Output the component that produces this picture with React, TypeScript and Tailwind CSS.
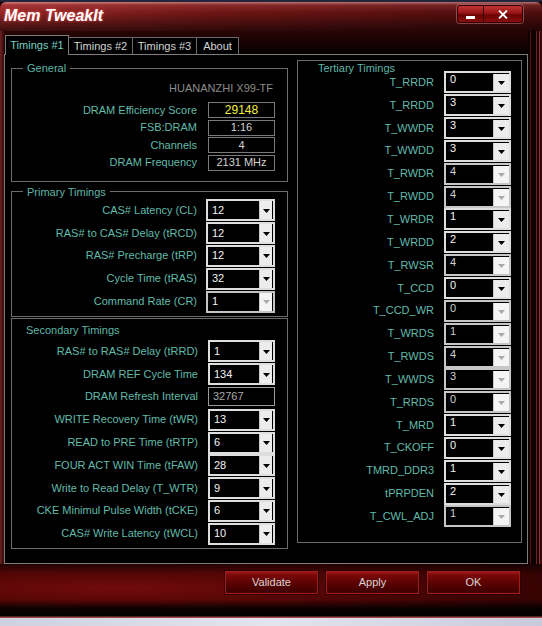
import React from "react";

type Item = { label: string; value: string; disabled?: boolean; field?: boolean };

const primary: Item[] = [
  { label: "CAS# Latency (CL)", value: "12" },
  { label: "RAS# to CAS# Delay (tRCD)", value: "12" },
  { label: "RAS# Precharge (tRP)", value: "12" },
  { label: "Cycle Time (tRAS)", value: "32" },
  { label: "Command Rate (CR)", value: "1", disabled: true },
];

const secondary: Item[] = [
  { label: "RAS# to RAS# Delay (tRRD)", value: "1" },
  { label: "DRAM REF Cycle Time", value: "134" },
  { label: "DRAM Refresh Interval", value: "32767", field: true },
  { label: "WRITE Recovery Time (tWR)", value: "13" },
  { label: "READ to PRE Time (tRTP)", value: "6" },
  { label: "FOUR ACT WIN Time (tFAW)", value: "28" },
  { label: "Write to Read Delay (T_WTR)", value: "9" },
  { label: "CKE Minimul Pulse Width (tCKE)", value: "6" },
  { label: "CAS# Write Latency (tWCL)", value: "10" },
];

const tertiary: Item[] = [
  { label: "T_RRDR", value: "0" },
  { label: "T_RRDD", value: "3" },
  { label: "T_WWDR", value: "3" },
  { label: "T_WWDD", value: "3" },
  { label: "T_RWDR", value: "4", disabled: true },
  { label: "T_RWDD", value: "4", disabled: true },
  { label: "T_WRDR", value: "1" },
  { label: "T_WRDD", value: "2" },
  { label: "T_RWSR", value: "4", disabled: true },
  { label: "T_CCD", value: "0" },
  { label: "T_CCD_WR", value: "0", disabled: true },
  { label: "T_WRDS", value: "1", disabled: true },
  { label: "T_RWDS", value: "4", disabled: true },
  { label: "T_WWDS", value: "3", disabled: true },
  { label: "T_RRDS", value: "0", disabled: true },
  { label: "T_MRD", value: "1" },
  { label: "T_CKOFF", value: "0" },
  { label: "TMRD_DDR3", value: "1" },
  { label: "tPRPDEN", value: "2" },
  { label: "T_CWL_ADJ", value: "1", disabled: true },
];

const general = [
  { label: "DRAM Efficiency Score", value: "29148", hi: true },
  { label: "FSB:DRAM", value: "1:16" },
  { label: "Channels", value: "4" },
  { label: "DRAM Frequency", value: "2131 MHz" },
];

function Arrow({ disabled }: { disabled?: boolean }) {
  return (
    <svg width="7" height="4" viewBox="0 0 7 4" className="mt-[1px]">
      <path d="M0 0H7L3.5 4Z" fill={disabled ? "#a9a9a9" : "#000"} />
    </svg>
  );
}

// Combo box used in the primary / secondary lists
function Combo({ value, disabled, wide }: { value: string; disabled?: boolean; wide?: boolean }) {
  return (
    <div
      className={
        "flex h-[22px] shrink-0 items-center border-2 bg-black " +
        (wide ? "w-[69px] " : "w-[67px] ") +
        (disabled ? "border-[#c4c4c4]" : "border-[#dedede]")
      }
    >
      <span className="pl-[4px] text-[11px] leading-[13px] text-[#f4f4f4]">{value}</span>
      <div
        className={
          "ml-auto mr-[1px] flex h-[18px] w-[13px] items-center justify-center border-l border-[#c9c9c9] " +
          (disabled ? "bg-[#f4f4f4]" : "bg-[#ececec]")
        }
      >
        <Arrow disabled={disabled} />
      </div>
    </div>
  );
}

// Combo box used in the tertiary list (value sits at the top)
function SmallCombo({ value, disabled }: { value: string; disabled?: boolean }) {
  return (
    <div
      className={
        "flex h-[22px] w-[67px] shrink-0 items-start border-2 bg-black " +
        (disabled ? "border-[#c6c6c6]" : "border-[#dedede]")
      }
    >
      <span
        className={
          "pl-[4px] text-[11px] leading-[13px] " + (disabled ? "text-[#cfcfcf]" : "text-[#f4f4f4]")
        }
      >
        {value}
      </span>
      <div
        className={
          "ml-auto mr-[0px] mt-[1px] flex h-[17px] w-[16px] items-center justify-center border-l border-[#c9c9c9] " +
          (disabled ? "bg-[#f4f4f4]" : "bg-[#ececec]")
        }
      >
        <Arrow disabled={disabled} />
      </div>
    </div>
  );
}

function Row({ item, wide, gap }: { item: Item; wide?: boolean; gap: string }) {
  return (
    <div className="flex h-[22.8px] items-center justify-end">
      <span className={"whitespace-nowrap text-[11px] leading-[13px] text-[#62bbaa] " + gap}>{item.label}</span>
      {item.field ? (
        <div className="flex h-[19px] w-[67px] shrink-0 items-center border border-[#9a9a9a] bg-black">
          <span className="pl-[4px] text-[11px] leading-[13px] text-[#a8a8a8]">{item.value}</span>
        </div>
      ) : (
        <Combo value={item.value} disabled={item.disabled} wide={wide} />
      )}
    </div>
  );
}

function Tab({ label, active, first }: { label: string; active?: boolean; first?: boolean }) {
  if (active) {
    return (
      <div className="relative z-10 -mb-px flex h-[20px] w-[64px] items-center justify-center border border-b-0 border-[#7c7c7c] bg-black text-[11px] text-[#74d0c3]">
        {label}
      </div>
    );
  }
  return (
    <div
      className={
        "flex h-[17px] items-center justify-center border-t border-r border-[#6a6a6a] bg-black text-[11px] text-[#d4d4d4] " +
        (first ? "w-[64px]" : "w-[64px]")
      }
    >
      {label}
    </div>
  );
}

function RedButton({ label }: { label: string }) {
  return (
    <div className="flex h-[23px] w-[93px] items-center justify-center border border-[#a21c1c] bg-[linear-gradient(180deg,#9a1a1a_0px,#7a0808_3px,#5c0202_11px,#3e0000_20px,#7a1010_23px)] text-[11px] text-[#d6d6d6] shadow-[0_0_0_1px_rgba(40,0,0,0.8)]">
      {label}
    </div>
  );
}

export default function App() {
  return (
    <div className="flex h-[626px] w-[542px] flex-col overflow-hidden bg-[#d6d6e4] font-['Liberation_Sans',Arial,sans-serif]">
      <div className="h-[2px] shrink-0 bg-[#24243a]" />
      <div className="flex h-[616px] shrink-0 flex-col bg-[#1a0000]">
        {/* title bar */}
        <div className="flex h-[29px] shrink-0 items-start rounded-t-[6px] bg-[linear-gradient(180deg,rgba(255,200,200,0.55)_0px,rgba(255,130,130,0.18)_3px,rgba(0,0,0,0)_10px,rgba(0,0,0,0.6)_29px),linear-gradient(90deg,#942626_0%,#701616_40%,#4e0c0c_100%)]">
          <span className="pl-[4px] pt-[4px] text-[16px] font-bold italic leading-[20px] text-white [text-shadow:0_0_3px_rgba(255,90,90,0.9)]">
            Mem TweakIt
          </span>
          <div className="ml-auto mr-[19px] mt-[3px] flex h-[18px] overflow-hidden rounded-[3px] border border-[#2a0000] shadow-[0_0_0_1px_rgba(230,140,140,0.45)]">
            <div className="flex w-[25px] items-end justify-center bg-[linear-gradient(180deg,#c23434_0%,#981414_45%,#6a0202_55%,#8a0e0e_100%)] pb-[3px]">
              <div className="h-[3px] w-[9px] bg-white" />
            </div>
            <div className="flex w-[39px] items-center justify-center border-l border-[#3a0000] bg-[linear-gradient(180deg,#c23434_0%,#981414_45%,#6a0202_55%,#8a0e0e_100%)]">
              <svg width="10" height="9" viewBox="0 0 10 9">
                <path d="M1 0.5L9 8.5M9 0.5L1 8.5" stroke="#fff" strokeWidth="1.8" />
              </svg>
            </div>
          </div>
        </div>

        {/* tabs + panel */}
        <div className="flex h-[533px] shrink-0">
          <div className="w-[4px] bg-[linear-gradient(90deg,#6a2222,#3a0808)]" />
          <div className="flex w-[524px] flex-col">
            <div className="flex h-[23px] items-end bg-[linear-gradient(180deg,#2a0404,#050000)] pl-[1px]">
              <Tab label="Timings #1" active />
              <Tab label="Timings #2" first />
              <Tab label="Timings #3" />
              <div className="flex h-[17px] w-[42px] items-center justify-center border-t border-r border-[#6a6a6a] bg-black text-[11px] text-[#d4d4d4]">
                About
              </div>
            </div>
            <div className="flex h-[510px] gap-[9px] border border-[#7c7c7c] bg-black pl-[6px]">
              {/* left column */}
              <div className="flex w-[277px] flex-col">
                <fieldset className="m-0 mt-[7px] min-w-0 border border-[#6c6c6c] p-0">
                  <legend className="ml-[11px] px-[4px] text-[11px] leading-[12px] text-[#5fb6a6]">General</legend>
                  <div className="pb-[10px] pr-[12px] pt-[8px]">
                    <div className="h-[13px] pr-[2px] text-right text-[11px] leading-[13px] text-[#8c8c8c]">
                      HUANANZHI X99-TF
                    </div>
                    <div className="mt-[7px] flex flex-col gap-[1.67px]">
                      {general.map((g) => (
                        <div key={g.label} className="flex h-[16px] items-center justify-end">
                          <span className="mr-[11px] text-[11px] leading-[13px] text-[#62bbaa]">{g.label}</span>
                          <div className="flex h-[16px] w-[67px] items-center justify-center border border-[#7a7a7a] bg-black">
                            <span
                              className={
                                g.hi
                                  ? "text-[12px] leading-[14px] text-[#f4f040]"
                                  : "text-[11px] leading-[13px] text-[#d2d2d2]"
                              }
                            >
                              {g.value}
                            </span>
                          </div>
                        </div>
                      ))}
                    </div>
                  </div>
                </fieldset>

                <fieldset className="m-0 mt-[4px] min-w-0 border border-[#6c6c6c] p-0">
                  <legend className="ml-[11px] px-[4px] text-[11px] leading-[12px] text-[#5fb6a6]">Primary Timings</legend>
                  <div className="pb-[3px] pr-[12px] pt-[1px]">
                    {primary.map((it) => (
                      <Row key={it.label} item={it} wide gap="mr-[9px]" />
                    ))}
                  </div>
                </fieldset>

                <div className="mt-[1px] border border-[#6c6c6c] pb-[3px] pr-[12px] pt-[5px]">
                  <div className="h-[13px] pl-[14px] text-[11px] leading-[13px] text-[#5fb6a6]">Secondary Timings</div>
                  <div className="mt-[3px]">
                    {secondary.map((it) => (
                      <Row key={it.label} item={it} gap="mr-[10px]" />
                    ))}
                  </div>
                </div>
              </div>

              {/* tertiary column */}
              <div className="mt-[5px] flex h-[483px] w-[225px] flex-col border border-[#6c6c6c] pr-[10px]">
                <div className="h-[10px] pl-[20px] text-[11px] leading-[14px] text-[#5fb6a6]">Tertiary Timings</div>
                {tertiary.map((it) => (
                  <div key={it.label} className="flex h-[22.85px] items-center justify-end">
                    <span className="mr-[10px] text-[11px] leading-[13px] text-[#62bbaa]">{it.label}</span>
                    <SmallCombo value={it.value} disabled={it.disabled} />
                  </div>
                ))}
              </div>
            </div>
          </div>
          {/* right frame */}
          <div className="flex w-[14px] bg-[#0c0000]">
            <div className="ml-[2px] w-[1px] bg-[#5a1212]" />
            <div className="ml-[5px] w-[1px] bg-[#7a1c1c]" />
            <div className="ml-[2px] w-[1px] bg-[#9a3030]" />
            <div className="flex-1 bg-[#3a0808]" />
          </div>
        </div>

        {/* bottom bar */}
        <div className="flex h-[54px] shrink-0 flex-col bg-[linear-gradient(180deg,rgba(0,0,0,0.45)_0px,rgba(0,0,0,0)_9px,rgba(0,0,0,0)_36px,rgba(0,0,0,0.85)_45px,#050000_52px,#a04848_53px),radial-gradient(ellipse_at_22%_45%,#720a0a,#440404_55%,#220000)]">
          <div className="flex justify-end gap-[8px] pr-[22px] pt-[7px]">
            <RedButton label="Validate" />
            <RedButton label="Apply" />
            <RedButton label="OK" />
          </div>
        </div>
      </div>
      <div className="flex-1 bg-[linear-gradient(90deg,#cfd0e0,#e4e4ee_50%,#c9c9dc)]" />
    </div>
  );
}
